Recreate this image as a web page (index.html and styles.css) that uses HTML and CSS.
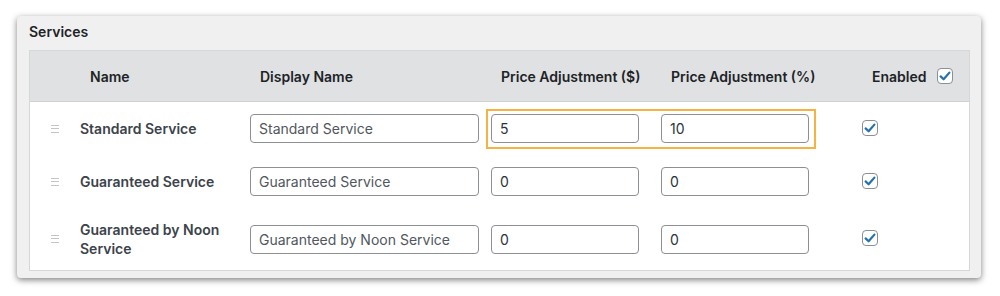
FILE: index.html
```html
<!DOCTYPE html>
<html lang="en">
<head>
    <meta charset="UTF-8">
    <title>Services</title>
    <link rel="stylesheet" href="styles.css">
</head>
<body>
    <div class="panel">
        <h2 class="panel-title">Services</h2>

        <div class="services-table">
            <div class="row header-row">
                <div class="cell"></div>
                <div class="cell th">Name</div>
                <div class="cell th">Display Name</div>
                <div class="cell th">Price Adjustment ($)</div>
                <div class="cell th">Price Adjustment (%)</div>
                <div class="cell th enabled-th">
                    Enabled
                    <span class="checkbox">
                        <svg viewBox="0 0 16 16" width="16" height="16"><path d="M3.6 8.4 L6.6 11.3 L12.4 4.6" fill="none" stroke="#2271b1" stroke-width="2.2" stroke-linecap="round" stroke-linejoin="round"/></svg>
                    </span>
                </div>
            </div>

            <div class="row service-row">
                <div class="cell handle"><span class="drag"></span></div>
                <div class="cell name">Standard Service</div>
                <div class="cell"><input class="text-input wide" type="text" value="Standard Service"></div>
                <div class="cell"><input class="text-input" type="text" value="5"></div>
                <div class="cell"><input class="text-input" type="text" value="10"></div>
                <div class="cell">
                    <span class="checkbox">
                        <svg viewBox="0 0 16 16" width="16" height="16"><path d="M3.6 8.4 L6.6 11.3 L12.4 4.6" fill="none" stroke="#2271b1" stroke-width="2.2" stroke-linecap="round" stroke-linejoin="round"/></svg>
                    </span>
                </div>
                <div class="highlight"></div>
            </div>

            <div class="row service-row">
                <div class="cell handle"><span class="drag"></span></div>
                <div class="cell name">Guaranteed Service</div>
                <div class="cell"><input class="text-input wide" type="text" value="Guaranteed Service"></div>
                <div class="cell"><input class="text-input" type="text" value="0"></div>
                <div class="cell"><input class="text-input" type="text" value="0"></div>
                <div class="cell">
                    <span class="checkbox">
                        <svg viewBox="0 0 16 16" width="16" height="16"><path d="M3.6 8.4 L6.6 11.3 L12.4 4.6" fill="none" stroke="#2271b1" stroke-width="2.2" stroke-linecap="round" stroke-linejoin="round"/></svg>
                    </span>
                </div>
            </div>

            <div class="row service-row">
                <div class="cell handle"><span class="drag"></span></div>
                <div class="cell name">Guaranteed by Noon Service</div>
                <div class="cell"><input class="text-input wide" type="text" value="Guaranteed by Noon Service"></div>
                <div class="cell"><input class="text-input" type="text" value="0"></div>
                <div class="cell"><input class="text-input" type="text" value="0"></div>
                <div class="cell">
                    <span class="checkbox">
                        <svg viewBox="0 0 16 16" width="16" height="16"><path d="M3.6 8.4 L6.6 11.3 L12.4 4.6" fill="none" stroke="#2271b1" stroke-width="2.2" stroke-linecap="round" stroke-linejoin="round"/></svg>
                    </span>
                </div>
            </div>
        </div>
    </div>
</body>
</html>
```

FILE: styles.css
```css
body {
    margin: 0;
    padding: 16px 19px 18px 17px;
    background-color: #fff;
    font-family: 'Inter', 'Liberation Sans', sans-serif;
    color: #1d2327;
}

.panel {
    background-color: #f0f0f1;
    border-radius: 4px;
    box-shadow: 0 2px 6px rgba(0, 0, 0, 0.5);
    padding: 6px 11px 7px 12px;
}

.panel-title {
    margin: 0 0 9px 0;
    font-size: 14px;
    font-weight: 600;
    line-height: 19px;
    color: #1d2327;
}

.services-table {
    background-color: #fff;
    border: 1px solid #d6d7d9;
}

.row {
    display: grid;
    grid-template-columns: 50px 170px 241px 170px 201px 1fr;
    align-items: center;
}

.header-row {
    height: 50px;
    background-color: #dfe1e2;
    border-bottom: 1px solid #d0d2d4;
}

.th {
    padding-left: 10px;
    font-size: 14px;
    font-weight: 600;
    color: #1d2327;
}

.enabled-th {
    display: flex;
    align-items: center;
    gap: 10px;
}

.service-row {
    position: relative;
    padding: 12px 0;
}

.handle {
    display: flex;
    padding-left: 21px;
}

.drag {
    width: 8px;
    height: 6px;
    border-top: 1px solid #c3c4c7;
    border-bottom: 1px solid #c3c4c7;
}

.drag::after {
    content: "";
    display: block;
    height: 1px;
    margin-top: 2px;
    background-color: #c3c4c7;
}

.name {
    font-size: 14px;
    font-weight: 600;
    line-height: 19px;
    color: #3c434a;
    padding-right: 20px;
}

.text-input {
    box-sizing: border-box;
    width: 148px;
    height: 29px;
    padding: 0 8px;
    border: 1px solid #8c8f94;
    border-radius: 4px;
    font-family: 'Inter', 'Liberation Sans', sans-serif;
    font-size: 14px;
    color: #2c3338;
    background-color: #fff;
    outline: none;
}

.text-input.wide {
    width: 229px;
    color: #50575e;
}

.checkbox {
    display: inline-block;
    box-sizing: border-box;
    width: 16px;
    height: 16px;
    border: 1px solid #8c8f94;
    border-radius: 4px;
    background-color: #fff;
    line-height: 0;
}

.checkbox svg {
    margin: -1px;
}

.highlight {
    position: absolute;
    left: 456px;
    top: 7px;
    width: 330px;
    height: 40px;
    box-sizing: border-box;
    border: 2px solid #f6b341;
    pointer-events: none;
}
```
